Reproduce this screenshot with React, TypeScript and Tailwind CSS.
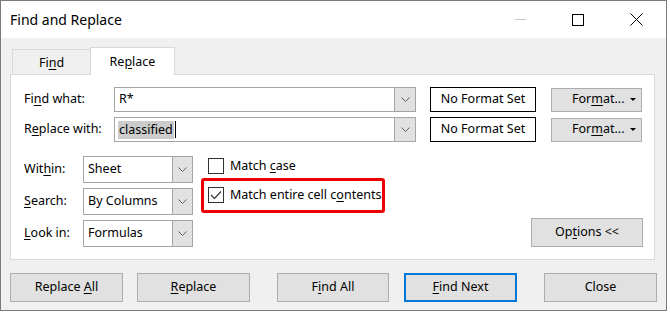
import React from 'react';

const font = { fontFamily: '"Segoe UI", "Noto Sans", "Open Sans", sans-serif' };

function Chevron() {
    return (
        <svg width="9" height="5" viewBox="0 0 9 5" className="block">
            <path d="M0.5 0.5 L4.5 4.5 L8.5 0.5" fill="none" stroke="#606060" strokeWidth="1" />
        </svg>
    );
}

function Combo({ value, selected }: { value: string; selected?: boolean }) {
    return (
        <div className="flex h-[25px] w-[302px] border border-[#a5a5a5] bg-white">
            <div className="flex flex-1 items-center pl-[3px]">
                {selected ? (
                    <span className="flex items-center">
                        <span className="bg-[#cccccc] px-[1px] leading-[18px]">{value}</span>
                        <span className="ml-[1px] h-[17px] w-px bg-black" />
                    </span>
                ) : (
                    <span className="pl-[1px]">{value}</span>
                )}
            </div>
            <div className="flex w-[21px] items-center justify-center border-l border-[#a5a5a5] bg-[#e1e1e1]">
                <Chevron />
            </div>
        </div>
    );
}

function Select({ value }: { value: string }) {
    return (
        <div className="flex h-[27px] w-[110px] border border-[#a5a5a5] bg-white">
            <div className="flex flex-1 items-center pl-[4px]">{value}</div>
            <div className="flex w-[20px] items-center justify-center border-l border-[#a5a5a5] bg-[#e1e1e1]">
                <Chevron />
            </div>
        </div>
    );
}

function Btn({ children, w, primary }: { children: React.ReactNode; w: string; primary?: boolean }) {
    return (
        <button
            className={
                'flex h-[29px] items-center justify-center bg-[#e1e1e1] text-[12.5px] text-black ' +
                w +
                (primary ? ' border-2 border-[#0078d7]' : ' border border-[#adadad]')
            }
        >
            <span className="whitespace-pre">{children}</span>
        </button>
    );
}

function U({ children }: { children: React.ReactNode }) {
    return <span className="underline decoration-1 underline-offset-[2px]">{children}</span>;
}

function Check({ checked }: { checked?: boolean }) {
    return (
        <div className="flex h-[16px] w-[16px] shrink-0 items-center justify-center border border-[#333333] bg-white">
            {checked && (
                <svg width="12" height="10" viewBox="0 0 12 10">
                    <path d="M1 5 L4.5 8.5 L11 1.5" fill="none" stroke="#333333" strokeWidth="1.2" />
                </svg>
            )}
        </div>
    );
}

function FormatBtn() {
    return (
        <div className="ml-[15px] flex h-[24px] w-[91px] items-center border border-[#adadad] bg-[#e1e1e1] pl-[20px]">
            <span>
                For<U>m</U>at...
            </span>
            <span className="ml-auto mr-[5px] h-0 w-0 border-x-[3px] border-t-[3px] border-x-transparent border-t-black" />
        </div>
    );
}

export default function App() {
    return (
        <div className="h-[312px] w-[670px] bg-white text-[12.5px] text-black" style={font}>
            <div className="flex h-[311px] w-[667px] flex-col border border-[#7a7a7a] bg-[#f0f0f0]">
                {/* title bar */}
                <div className="flex h-[37px] items-center bg-white">
                    <span className="ml-[9px] text-[14px]">Find and Replace</span>
                    <div className="ml-auto flex items-center">
                        <div className="mr-[46px] h-px w-[11px] bg-[#c4c4c4]" />
                        <div className="mr-[46px] h-[12px] w-[12px] border border-black" />
                        <svg width="13" height="13" viewBox="0 0 13 13" className="mr-[23px]">
                            <path d="M0.5 0.5 L12.5 12.5 M12.5 0.5 L0.5 12.5" stroke="black" strokeWidth="1" />
                        </svg>
                    </div>
                </div>

                {/* tabs */}
                <div className="mt-[9px] flex items-end pl-[11px]">
                    <div className="flex h-[25px] w-[78px] items-center justify-center border-l border-t border-[#d9d9d9] pt-[2px]">
                        <span>
                            Fi<U>n</U>d
                        </span>
                    </div>
                    <div className="relative z-10 -mb-px flex h-[28px] w-[85px] items-center justify-center border border-b-0 border-[#d9d9d9] bg-white pt-[2px]">
                        <span>
                            Re<U>p</U>lace
                        </span>
                    </div>
                </div>

                {/* panel */}
                <div className="ml-[9px] flex h-[186px] w-[645px] flex-col border border-[#d9d9d9] bg-white pl-[13px] pt-[12px]">
                    <div className="flex items-center">
                        <span className="w-[90px]">
                            Fi<U>n</U>d what:
                        </span>
                        <Combo value="R*" />
                        <div className="ml-[14px] flex h-[25px] w-[106px] items-center justify-center border border-black">
                            No Format Set
                        </div>
                        <FormatBtn />
                    </div>
                    <div className="mt-[5px] flex items-center">
                        <span className="w-[90px]">
                            R<U>e</U>place with:
                        </span>
                        <Combo value="classified" selected />
                        <div className="ml-[14px] flex h-[25px] w-[106px] items-center justify-center border border-black">
                            No Format Set
                        </div>
                        <FormatBtn />
                    </div>

                    <div className="mt-[14px] flex">
                        <div className="flex flex-col gap-[5px]">
                            <div className="flex items-center">
                                <span className="w-[59px]">
                                    Wit<U>h</U>in:
                                </span>
                                <Select value="Sheet" />
                            </div>
                            <div className="flex items-center">
                                <span className="w-[59px]">
                                    <U>S</U>earch:
                                </span>
                                <Select value="By Columns" />
                            </div>
                            <div className="flex items-center">
                                <span className="w-[59px]">
                                    <U>L</U>ook in:
                                </span>
                                <Select value="Formulas" />
                            </div>
                        </div>

                        <div className="ml-[8px] flex flex-col">
                            <div className="ml-[7px] mt-[1px] flex items-center">
                                <Check />
                                <span className="ml-[6px] whitespace-nowrap">
                                    Match <U>c</U>ase
                                </span>
                            </div>
                            <div className="mt-[2px] flex h-[35px] w-[184px] items-center rounded-[3px] border-[3px] border-[#ee0000] pl-[4px]">
                                <Check checked />
                                <span className="ml-[6px] whitespace-nowrap">
                                    Match entire cell c<U>o</U>ntents
                                </span>
                            </div>
                        </div>

                        <div className="ml-auto mr-[11px] flex flex-col justify-end">
                            <Btn w="w-[112px]">
                                Op<U>t</U>ions &lt;&lt;
                            </Btn>
                        </div>
                    </div>
                </div>

                {/* bottom buttons */}
                <div className="ml-[9px] mt-[13px] flex">
                    <Btn w="w-[113px]">
                        Replace <U>A</U>ll
                    </Btn>
                    <div className="ml-[14px]">
                        <Btn w="w-[113px]">
                            <U>R</U>eplace
                        </Btn>
                    </div>
                    <div className="ml-[27px]">
                        <Btn w="w-[112px]">
                            F<U>i</U>nd All
                        </Btn>
                    </div>
                    <div className="ml-[15px]">
                        <Btn w="w-[113px]" primary>
                            <U>F</U>ind Next
                        </Btn>
                    </div>
                    <div className="ml-[27px]">
                        <Btn w="w-[113px]">Close</Btn>
                    </div>
                </div>
            </div>
        </div>
    );
}
